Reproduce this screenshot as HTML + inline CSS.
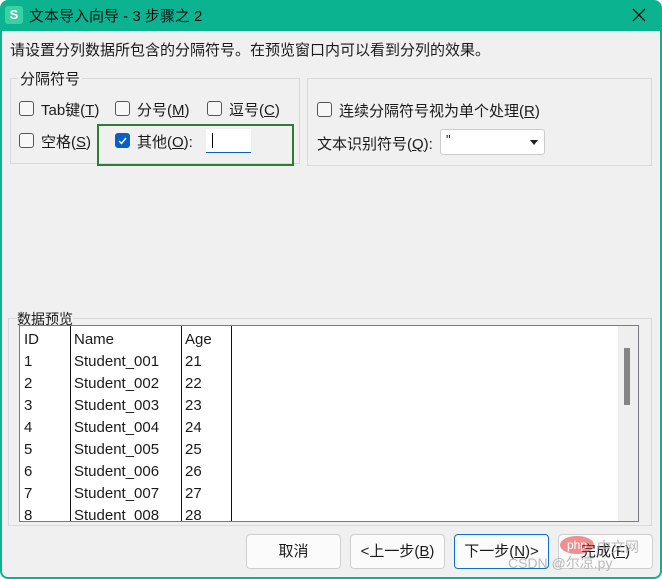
<!DOCTYPE html>
<html><head><meta charset="utf-8"><style>
*{box-sizing:border-box;margin:0;padding:0}
body{width:662px;height:579px;overflow:hidden;background:#fff;font-family:"Liberation Sans","Noto Sans CJK SC",sans-serif;font-size:15px;color:#1a1a1a;position:relative}
.win{position:absolute;left:0;top:0;width:662px;height:579px;background:#0bb391;border-radius:8px 8px 8px 8px}
.content{position:absolute;left:2px;top:31px;width:658px;height:546px;background:#f0f0f0;border-radius:0 0 6px 6px}
.a{position:absolute;white-space:nowrap}
.cb{position:absolute;width:15px;height:15px;border:1px solid #555;border-radius:3px;background:#f7f7f7}
.grp{position:absolute;border:1px solid #d9d9d9}
.btn{position:absolute;top:534px;width:95px;height:35px;border:1px solid #cfcfcf;border-radius:4px;background:#fbfbfb;text-align:center;line-height:33px;font-size:15px}
u{text-decoration:underline}
</style></head><body>
<div class="win"></div>
<div class="a" style="left:5px;top:6px;width:18px;height:18px;background:#3ad0a2;border-radius:3px;color:#fff;font-size:13px;text-align:center;line-height:18px;font-weight:bold">S</div>
<div class="a" style="left:29px;top:5px;font-size:15px;color:#111">文本导入向导 - 3 步骤之 2</div>
<svg class="a" style="left:632px;top:8px" width="14" height="14"><path d="M1 1L13 13M13 1L1 13" stroke="#111" stroke-width="1.3"/></svg>
<div class="content"></div>
<div class="a" style="left:10px;top:39px">请设置分列数据所包含的分隔符号。在预览窗口内可以看到分列的效果。</div>

<div class="grp" style="left:10px;top:78px;width:290px;height:86px"></div>
<div class="a" style="left:18px;top:68px;background:#f0f0f0;padding:0 2px">分隔符号</div>
<div class="cb" style="left:19px;top:101px"></div><div class="a" style="left:41px;top:99px">Tab键(<u>T</u>)</div>
<div class="cb" style="left:115px;top:101px"></div><div class="a" style="left:137px;top:99px">分号(<u>M</u>)</div>
<div class="cb" style="left:207px;top:101px"></div><div class="a" style="left:229px;top:99px">逗号(<u>C</u>)</div>
<div class="cb" style="left:19px;top:133px"></div><div class="a" style="left:41px;top:131px">空格(<u>S</u>)</div>
<div class="a" style="left:97px;top:124px;width:197px;height:42px;border:2px solid #2e7d32"></div>
<div class="cb" style="left:115px;top:133px;background:#0a5fc2;border-color:#0a5fc2"><svg width="13" height="13" style="position:absolute;left:0;top:0"><path d="M3 7L5.5 9.5L10 4" stroke="#fff" stroke-width="1.4" fill="none"/></svg></div>
<div class="a" style="left:137px;top:131px">其他(<u>O</u>):</div>
<div class="a" style="left:206px;top:129px;width:45px;height:24px;background:#fff;border-bottom:1px solid #0a5fc2"><div style="position:absolute;left:6px;top:4px;width:1px;height:15px;background:#000"></div></div>

<div class="grp" style="left:307px;top:78px;width:345px;height:88px"></div>
<div class="cb" style="left:317px;top:102px"></div><div class="a" style="left:339px;top:100px">连续分隔符号视为单个处理(<u>R</u>)</div>
<div class="a" style="left:317px;top:133px">文本识别符号(<u>Q</u>):</div>
<div class="a" style="left:440px;top:129px;width:105px;height:26px;background:#fff;border:1px solid #ccc;border-radius:3px"><span style="position:absolute;left:5px;top:2px;font-size:13px">"</span><svg style="position:absolute;left:89px;top:10px" width="8" height="5"><path d="M0 0H8L4 5Z" fill="#222"/></svg></div>

<div class="grp" style="left:8px;top:318px;width:644px;height:208px"></div>
<div class="a" style="left:17px;top:309px;background:#f0f0f0;font-size:14px">数据预览</div>
<div class="a" style="left:19px;top:325px;width:620px;height:197px;background:#fff;border:1px solid #7a7a80;overflow:hidden">
<div style="position:absolute;right:0;top:0;width:20px;height:195px;background:#efefef"></div>
<div style="position:absolute;left:604px;top:22px;width:6px;height:57px;background:#858585"></div>
<div style="position:absolute;left:50px;top:0;width:1px;height:200px;background:#111"></div>
<div style="position:absolute;left:161px;top:0;width:1px;height:200px;background:#111"></div>
<div style="position:absolute;left:211px;top:0;width:1px;height:200px;background:#111"></div>
<div style="position:absolute;left:4px;top:3px;line-height:22px;font-size:15px">ID<br>1<br>2<br>3<br>4<br>5<br>6<br>7<br>8</div>
<div style="position:absolute;left:54px;top:3px;line-height:22px;font-size:15px">Name<br>Student_001<br>Student_002<br>Student_003<br>Student_004<br>Student_005<br>Student_006<br>Student_007<br>Student_008</div>
<div style="position:absolute;left:165px;top:3px;line-height:22px;font-size:15px">Age<br>21<br>22<br>23<br>24<br>25<br>26<br>27<br>28</div>
</div>

<div class="btn" style="left:246px">取消</div>
<div class="btn" style="left:350px">&lt;上一步(<u>B</u>)</div>
<div class="btn" style="left:454px;border-color:#0a6fd0">下一步(<u>N</u>)&gt;</div>
<div class="btn" style="left:558px">完成(<u>F</u>)</div>
<div class="a" style="left:560px;top:536px;width:34px;height:18px;background:#e63a3a;border-radius:50%;opacity:.55;color:#fff;font-size:12px;text-align:center;line-height:18px">php</div>
<div class="a" style="left:597px;top:537px;color:#aaa;font-size:14px;opacity:.8">中文网</div>
<div class="a" style="left:508px;top:553px;color:#aaa;font-size:14px;opacity:.8">CSDN @尔凉.py</div>
</body></html>
